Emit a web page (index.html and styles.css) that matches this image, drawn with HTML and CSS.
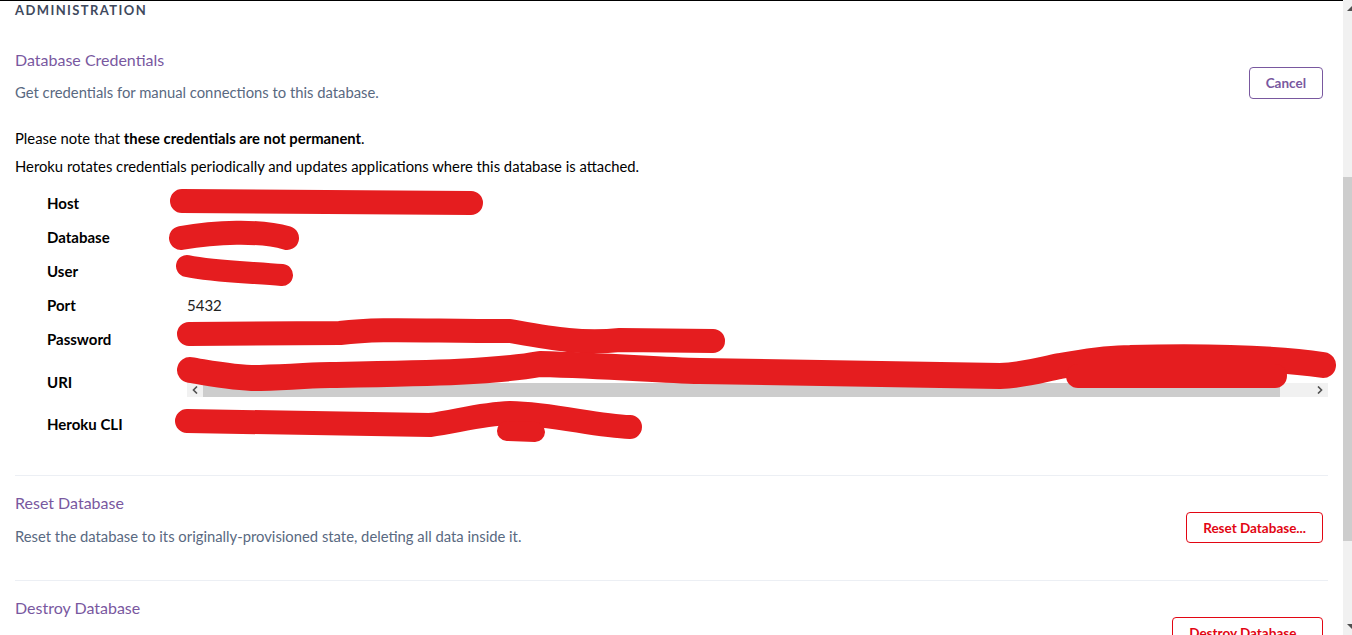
FILE: index.html
```html
<!DOCTYPE html>
<html lang="en">
<head>
  <meta charset="UTF-8" />
  <meta name="viewport" content="width=device-width, initial-scale=1.0" />
  <title>Administration</title>
  <link rel="stylesheet" href="styles.css">
</head>
<body>
  <div class="page">
    <main class="content">
      <h2 class="eyebrow">Administration</h2>

      <section class="panel first">
        <div class="panel-head">
          <div>
            <h3 class="panel-title">Database Credentials</h3>
            <p class="panel-desc">Get credentials for manual connections to this database.</p>
          </div>
          <button class="btn btn-purple">Cancel</button>
        </div>

        <p class="note first-note">Please note that <strong>these credentials are not permanent</strong>.</p>
        <p class="note">Heroku rotates credentials periodically and updates applications where this database is attached.</p>

        <div class="creds">
          <div class="label">Host</div>
          <div class="value"></div>
          <div class="label">Database</div>
          <div class="value"></div>
          <div class="label">User</div>
          <div class="value"></div>
          <div class="label">Port</div>
          <div class="value">5432</div>
          <div class="label">Password</div>
          <div class="value"></div>
          <div class="label tall">URI</div>
          <div class="value scroll-value">
            <div class="value-line"></div>
            <div class="hscroll">
              <span class="hs-btn">
                <svg width="6" height="8" viewBox="0 0 6 8"><polyline points="5,0.5 1.5,4 5,7.5" fill="none" stroke="#505050" stroke-width="1.6"/></svg>
              </span>
              <span class="hs-thumb"></span>
              <span class="hs-track"></span>
              <span class="hs-btn">
                <svg width="6" height="8" viewBox="0 0 6 8"><polyline points="1,0.5 4.5,4 1,7.5" fill="none" stroke="#505050" stroke-width="1.6"/></svg>
              </span>
            </div>
          </div>
          <div class="label">Heroku CLI</div>
          <div class="value"></div>

          <!-- redacted values -->
          <svg class="redact" width="1330" height="270" viewBox="0 0 1330 270">
            <g fill="none" stroke="#e51d1f" stroke-linecap="round" stroke-linejoin="round">
              <path d="M167 15 L456 17" stroke-width="24"/>
              <path d="M166 52 C200 46,245 44,272 52" stroke-width="24"/>
              <path d="M172 80 C200 86,235 86,267 89" stroke-width="22"/>
              <path d="M174 148 L325 147 C365 142,405 145,495 145 C535 152,565 158,605 154 L698 155" stroke-width="24"/>
              <path d="M175 184 C200 188,225 193,245 192 C280 191,300 189,315 189 C420 187,480 186,525 178 C600 180,640 184,685 185 C800 186,900 188,985 190 C1010 189,1025 184,1045 180 C1070 176,1090 172,1115 172 C1200 170,1260 172,1308 179" stroke-width="26"/>
              <path d="M1063 190 L1260 190" stroke-width="24"/>
              <path d="M172 235 L415 239 C440 236,465 228,495 227 C540 228,580 240,615 241" stroke-width="24"/>
              <path d="M492 245 L520 246" stroke-width="20"/>
            </g>
          </svg>
        </div>
      </section>

      <section class="panel">
        <div class="panel-head">
          <div>
            <h3 class="panel-title">Reset Database</h3>
            <p class="panel-desc">Reset the database to its originally-provisioned state, deleting all data inside it.</p>
          </div>
          <button class="btn btn-red">Reset Database...</button>
        </div>
      </section>

      <section class="panel last">
        <div class="panel-head">
          <h3 class="panel-title">Destroy Database</h3>
          <button class="btn btn-red">Destroy Database...</button>
        </div>
      </section>
    </main>

    <div class="scrollbar">
      <svg class="sb-arrow" width="9" height="14" viewBox="0 0 9 14"><polygon points="4,11 9,6 9,11" fill="#505050"/></svg>
      <div class="sb-space top"></div>
      <div class="sb-thumb"></div>
      <div class="sb-space"></div>
      <svg class="sb-arrow" width="9" height="14" viewBox="0 0 9 14"><polygon points="4,3 9,3 9,8" fill="#505050"/></svg>
    </div>
  </div>
</body>
</html>
```

FILE: styles.css
```css
body {
  margin: 0;
  background: #fff;
  font-family: Lato, "Open Sans", sans-serif;
  color: #000;
  overflow: hidden;
}
.page {
  display: flex;
  height: 635px;
}
.content {
  flex: 1;
  border-top: 1px solid #000;
  padding: 0 15px;
  overflow: hidden;
}
.eyebrow {
  margin: 0;
  font-size: 13px;
  line-height: 19px;
  font-weight: 700;
  letter-spacing: 1.4px;
  text-transform: uppercase;
  color: #3f4a5e;
}
.panel {
  padding: 17px 0 34px;
  border-bottom: 1px solid #eceff4;
}
.panel.first {
  margin-top: 13px;
}
.panel.last {
  border-bottom: none;
}
.panel-head {
  display: flex;
  justify-content: space-between;
  align-items: flex-start;
}
.panel-title {
  margin: 0;
  font-size: 16px;
  line-height: 20px;
  font-weight: 400;
  color: #79589f;
}
.panel-desc {
  margin: 12px 0 0;
  font-size: 14.8px;
  line-height: 20px;
  color: #596981;
}
.panel + .panel .panel-desc {
  margin-top: 13px;
}
.btn {
  margin: 19px 5px 0 0;
  height: 32px;
  padding: 0 16px;
  background: #fff;
  border-radius: 4px;
  font-family: inherit;
  font-size: 13.5px;
  font-weight: 700;
  cursor: pointer;
}
.btn-purple {
  margin-top: 17px;
  border: 1px solid #79589f;
  color: #79589f;
}
.btn-red {
  height: 31px;
  border: 1px solid #e20613;
  color: #e20613;
}
.note {
  margin: 8px 0 0;
  font-size: 14.8px;
  line-height: 20px;
}
.note.first-note {
  margin-top: 26px;
}
.creds {
  position: relative;
  display: grid;
  grid-template-columns: 140px 1fr;
  margin-top: 10px;
  padding-left: 32px;
  font-size: 15px;
}
.label {
  display: flex;
  align-items: center;
  height: 34px;
  font-weight: 700;
}
.label.tall {
  height: 51px;
}
.value {
  display: flex;
  align-items: center;
  height: 34px;
  color: #222;
}
.scroll-value {
  display: block;
  height: 51px;
  padding-top: 7px;
  box-sizing: border-box;
}
.value-line {
  height: 20px;
}
.hscroll {
  display: flex;
  height: 14px;
  background: #f1f1f1;
}
.hs-btn {
  display: flex;
  align-items: center;
  justify-content: center;
  width: 16px;
}
.hs-thumb {
  flex: 1;
  background: #cdcdcd;
}
.hs-track {
  width: 32px;
}
.redact {
  position: absolute;
  left: 0;
  top: 0;
  overflow: visible;
  pointer-events: none;
}
.scrollbar {
  display: flex;
  flex-direction: column;
  width: 9px;
  background: #f1f1f1;
}
.sb-space {
  flex: 1;
}
.sb-space.top {
  flex: 0 0 163px;
}
.sb-thumb {
  height: 364px;
  background: #cdcdcd;
}
```
